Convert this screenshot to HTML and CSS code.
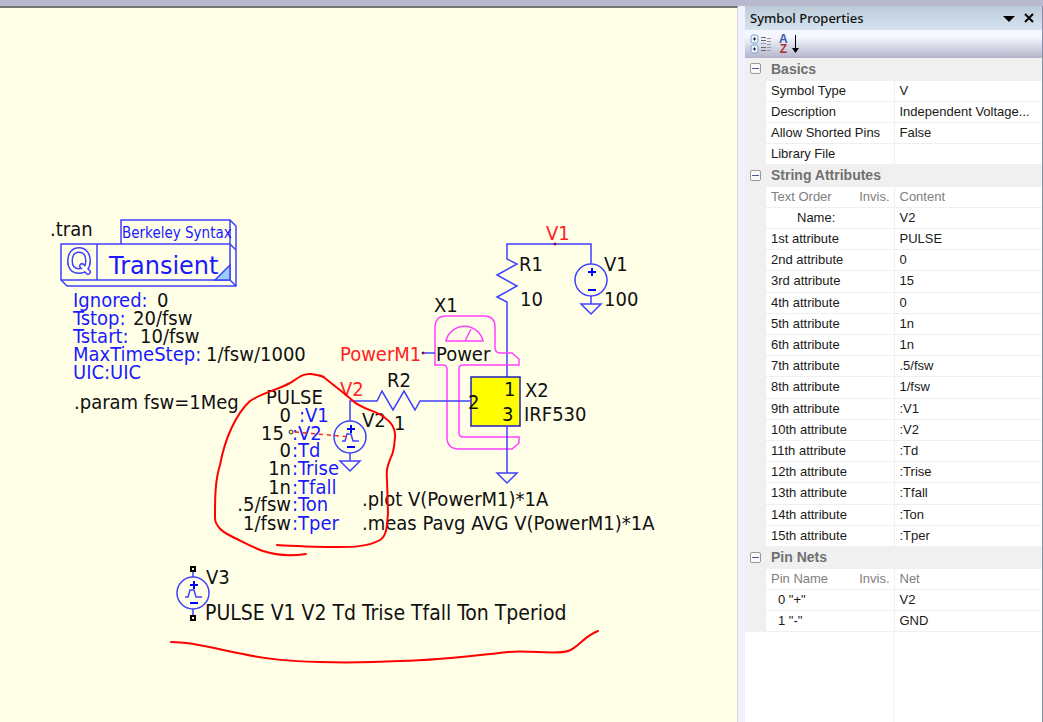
FILE: index.html
```
<!DOCTYPE html>
<html lang="en">

<head>
  <meta charset="UTF-8">
  <meta name="viewport" content="width=device-width, initial-scale=1.0">
  <title>Schematic</title>
  <link rel="stylesheet" href="styles.css">
</head>

<body>
  <main class="canvas">
    <svg class="schematic" width="100%" height="100%">
      <defs>
        <g id="source" class="wire">
          <circle r="16" />
          <path class="sign" d="M-3 -8h8M1 -12v8M-3 10h8" />
        </g>
        <path id="gnd" class="wire" d="M-10 0h20l-10 10z" />
        <path id="pulse" class="wire" d="M-8 4h3l2 -7h4l2 7h6" />
      </defs>

      <g transform="translate(0 -8)">
        <!-- .tran block -->
        <g class="wire">
          <path d="M61 244h169v36h-169zM97 244v36M121 244v-24h109v24M230 220l6 6v60h-169l-6 -6M230 244l6 6M230 280l6 6" />
          <path class="corner" d="M215 280l15 -15v15z" />
        </g>
        <path class="q-out" d="M79 250c-6 0 -9 5 -9 11s3 10 9 10 9 -4 9 -10 -3 -11 -9 -11zM82 266l6 6" />
        <path class="q-in" d="M79 250c-6 0 -9 5 -9 11s3 10 9 10 9 -4 9 -10 -3 -11 -9 -11zM82 266l6 6" />
        <text x="50" y="236">.tran</text>
        <text class="blue syntax" x="122" y="238">Berkeley Syntax</text>
        <text class="blue title" x="109" y="274">Transient</text>
        <g class="blue">
          <text x="73" y="307">Ignored:</text>
          <text x="73" y="325">Tstop:</text>
          <text x="73" y="343">Tstart:</text>
          <text x="73" y="361">MaxTimeStep:</text>
          <text x="73" y="379">UIC:UIC</text>
        </g>
        <text x="157" y="307">0</text>
        <text x="133" y="325">20/fsw</text>
        <text x="140" y="343">10/fsw</text>
        <text x="206" y="361">1/fsw/1000</text>
        <text x="74" y="409">.param fsw=1Meg</text>

        <!-- V1 and R1 -->
        <path class="wire" d="M507 378v-76l-10 -5 20 -11 -20 -11 20 -11 -10 -5v-15h84v20M591 296v8" />
        <use href="#source" x="591" y="280" />
        <use href="#gnd" x="591" y="304" />
        <circle class="node" cx="555" cy="244" r="1" />
        <text class="red" x="546" y="240">V1</text>
        <text x="519" y="271">R1</text>
        <text x="520" y="306">10</text>
        <text x="604" y="271">V1</text>
        <text x="604" y="306">100</text>

        <!-- power probe -->
        <path class="probe" d="M446 316h38q11 0 11 11v20q0 6 5 6h12l7 6v6h-56q-4 0 -4 4v64q0 4 4 4h56v6l-7 6h-53q-12 0 -12 -12v-68q0 -4 -4 -4h-8v-37q0 -12 11 -12z" />
        <path class="probe" d="M446 341a19 19 0 0 1 37 0zM465 341l6 -12" />
        <path class="wire" d="M422 353h13" />
        <circle class="node" cx="423" cy="353" r="1" />
        <text x="434" y="312">X1</text>
        <text class="red" x="340" y="361">PowerM1</text>
        <text x="436" y="361">Power</text>

        <!-- X2 and R2 -->
        <rect class="chip" x="471" y="377" width="49" height="49" />
        <path class="wire" d="M471 401h-51l-5 9 -11 -19 -11 19 -11 -19 -5 10h-27v20M350 453v8M507 426v47" />
        <use href="#gnd" x="507" y="473" />
        <text x="504" y="396">1</text>
        <text x="468" y="409">2</text>
        <text x="502" y="421">3</text>
        <text x="525" y="397">X2</text>
        <text x="524" y="421">IRF530</text>
        <text x="387" y="387">R2</text>
        <text x="394" y="430">1</text>

        <!-- V2 -->
        <use href="#source" x="350" y="437" />
        <use href="#pulse" x="350" y="437" />
        <use href="#gnd" x="350" y="461" />
        <text class="red" x="340" y="396">V2</text>
        <text x="362" y="427">V2</text>
        <text x="266" y="404">PULSE</text>
        <g text-anchor="end">
          <text x="291" y="422">0</text>
          <text x="284" y="440">15</text>
          <text x="291" y="457">0</text>
          <text x="291" y="475">1n</text>
          <text x="291" y="494">1n</text>
          <text x="291" y="511">.5/fsw</text>
          <text x="291" y="530">1/fsw</text>
        </g>
        <g class="blue">
          <text x="299" y="422">:V1</text>
          <text x="292" y="440">:V2</text>
          <text x="292" y="457">:Td</text>
          <text x="292" y="475">:Trise</text>
          <text x="292" y="494">:Tfall</text>
          <text x="292" y="511">:Ton</text>
          <text x="292" y="530">:Tper</text>
        </g>
        <path class="tie" d="M295 432l56 5" />
        <circle class="anchor" cx="291" cy="432" r="2" />

        <text x="362" y="506">.plot V(PowerM1)*1A</text>
        <text x="362" y="530">.meas Pavg AVG V(PowerM1)*1A</text>

        <!-- V3 -->
        <use href="#source" x="193" y="593" />
        <use href="#pulse" x="193" y="593" />
        <path class="wire" d="M193 571v6M193 609v6" />
        <rect class="pin" x="191" y="567" width="4" height="4" />
        <rect class="pin" x="191" y="616" width="4" height="4" />
        <text x="206" y="584">V3</text>
        <text class="value" x="205" y="620">PULSE V1 V2 Td Trise Tfall Ton Tperiod</text>

        <!-- red pen -->
        <path class="pen" d="M306 554C292 556 275 555 263 551C252 547 243 542 237 539C226 534 214 528 215 516C215 500 215 480 220 465C225 438 236 414 250 401C262 393 277 390 290 383C298 378 304 373 311 374C318 375 323 375 326 379C336 387 344 393 352 400C362 410 376 410 384 417C391 422 396 428 395 437C394 448 394 452 391 457C388 465 386 468 387 480L388 513C387 525 387 536 380 540C368 547 350 547 338 547C318 547 298 546 277 545" />
        <path class="pen" d="M171 642C196 642 220 650 243 654C270 660 290 661 320 662C350 663 380 662 400 661C440 660 480 655 508 652C530 650 556 655 568 651C578 648 584 636 598 631" />
      </g>
    </svg>
  </main>

  <aside class="panel">
    <header class="panel-head">
      <h1>Symbol Properties</h1>
      <button type="button" aria-label="Menu"><svg width="12" height="12"><path d="M0 4h12l-6 6z" /></svg></button>
      <button type="button" aria-label="Close"><svg width="12" height="12"><path class="cross" d="M2 2l8 8M10 2l-8 8" /></svg></button>
    </header>
    <div class="tools">
      <button type="button" aria-label="Categorized">
        <svg width="22" height="20">
          <rect class="knob" x="1" y="1" width="7" height="8" rx="2" />
          <rect class="knob" x="1" y="11" width="7" height="8" rx="2" />
          <path d="M3 5h3M3 15h3M4.500 3.500v3M4.500 13.500v3" stroke="#123" />
          <path d="M11 3.500h5M11 6.500h5M11 13.500h5M11 16.500h5" stroke="#666" />
          <path d="M11 9.500h5M17 4.500h4M17 7.500h4M17 10.500h4M17 13.500h4M17 16.500h4" stroke="#99a" />
        </svg>
      </button>
      <button type="button" class="sort" aria-label="Alphabetical">
        <span><b class="a">A</b><b class="z">Z</b></span>
        <svg width="7" height="20"><path d="M3.500 1v16" stroke="#000" /><path d="M0 14h7l-3.500 5z" /></svg>
      </button>
    </div>

    <table class="grid">
      <colgroup>
        <col class="col-gutter">
        <col class="col-name">
        <col>
      </colgroup>
      <tbody>
        <tr class="group"><td><button type="button" aria-label="Collapse"></button></td><th colspan="2">Basics</th></tr>
        <tr><td></td><th>Symbol Type</th><td>V</td></tr>
        <tr><td></td><th>Description</th><td>Independent Voltage...</td></tr>
        <tr><td></td><th>Allow Shorted Pins</th><td>False</td></tr>
        <tr><td></td><th>Library File</th><td></td></tr>
      </tbody>
      <tbody>
        <tr class="group"><td><button type="button" aria-label="Collapse"></button></td><th colspan="2">String Attributes</th></tr>
        <tr class="muted"><td></td><th><div class="pair"><span>Text Order</span><span>Invis.</span></div></th><td>Content</td></tr>
        <tr><td></td><th class="name">Name:</th><td>V2</td></tr>
        <tr><td></td><th>1st attribute</th><td>PULSE</td></tr>
        <tr><td></td><th>2nd attribute</th><td>0</td></tr>
        <tr><td></td><th>3rd attribute</th><td>15</td></tr>
        <tr><td></td><th>4th attribute</th><td>0</td></tr>
        <tr><td></td><th>5th attribute</th><td>1n</td></tr>
        <tr><td></td><th>6th attribute</th><td>1n</td></tr>
        <tr><td></td><th>7th attribute</th><td>.5/fsw</td></tr>
        <tr><td></td><th>8th attribute</th><td>1/fsw</td></tr>
        <tr><td></td><th>9th attribute</th><td>:V1</td></tr>
        <tr><td></td><th>10th attribute</th><td>:V2</td></tr>
        <tr><td></td><th>11th attribute</th><td>:Td</td></tr>
        <tr><td></td><th>12th attribute</th><td>:Trise</td></tr>
        <tr><td></td><th>13th attribute</th><td>:Tfall</td></tr>
        <tr><td></td><th>14th attribute</th><td>:Ton</td></tr>
        <tr><td></td><th>15th attribute</th><td>:Tper</td></tr>
      </tbody>
      <tbody>
        <tr class="group"><td><button type="button" aria-label="Collapse"></button></td><th colspan="2">Pin Nets</th></tr>
        <tr class="muted"><td></td><th><div class="pair"><span>Pin Name</span><span>Invis.</span></div></th><td>Net</td></tr>
        <tr><td></td><th class="pin-name">0 "+"</th><td>V2</td></tr>
        <tr><td></td><th class="pin-name">1 "-"</th><td>GND</td></tr>
      </tbody>
    </table>
    <div class="rest"></div>
  </aside>
</body>

</html>
```
FILE: styles.css
```
* {
  box-sizing: border-box;
  margin: 0;
  padding: 0;
}

body {
  display: flex;
  height: 100vh;
  border-top: 6px solid #b8b8ce;
  background-color: #f0f0ff;
  font-family: "Liberation Sans", Arial, sans-serif;
  overflow: hidden;
}

button {
  border: 0;
  background: none;
  cursor: pointer;
}

/* drawing area */
.canvas {
  flex: 1;
  min-width: 0;
  border-top: 2px solid #77776f;
  border-right: 1px solid #d8d8dc;
  background-color: #ffffe8;
}

.schematic {
  display: block;
  font-family: "DejaVu Sans Condensed", "Noto Sans", sans-serif;
  font-size: 20px;
  fill: #111;
}

.schematic .blue {
  fill: #1a1aff;
}

.schematic .red {
  fill: #f22;
}

.schematic .syntax {
  font-size: 15px;
}

.schematic .value {
  font-size: 21px;
}

.schematic .title {
  font-family: "DejaVu Sans", sans-serif;
  font-size: 24px;
}

.wire {
  fill: none;
  stroke: #4040ff;
  stroke-width: 1.5;
}

.sign {
  stroke: #00f;
  stroke-width: 2;
}

.corner {
  fill: #9cf;
}

.q-out,
.q-in {
  fill: none;
  stroke: #4040ff;
  stroke-width: 6;
  stroke-linecap: round;
}

.q-in {
  stroke: #ffffe8;
  stroke-width: 3;
}

.node {
  fill: #800040;
  stroke: #800040;
}

.probe {
  fill: none;
  stroke: #ff40ff;
  stroke-width: 1.5;
}

.chip {
  fill: #ff0;
  stroke: #2020c0;
  stroke-width: 1.5;
}

.tie {
  stroke: #f22;
  stroke-width: 1.5;
  stroke-dasharray: 4 4;
}

.anchor {
  fill: #ff0;
  stroke: #2020c0;
}

.pin {
  fill: #ffffe8;
  stroke: #000;
  stroke-width: 2;
}

.pen {
  fill: none;
  stroke: #f00;
  stroke-width: 2;
  stroke-linecap: round;
}

/* properties panel */
.panel {
  display: flex;
  flex-direction: column;
  width: 298px;
  margin-left: 7px;
  border-right: 1px solid #8a8fa5;
  background-color: #fff;
}

.panel-head {
  display: flex;
  align-items: center;
  gap: 8px;
  height: 24px;
  padding: 0 7px 0 5px;
  background: linear-gradient(#bccbd9, #d6e4f0);
}

.panel-head h1 {
  flex: 1;
  font: 500 13px "Noto Sans", sans-serif;
  color: #111;
}

.panel-head button,
.tools svg,
.panel-head svg {
  display: block;
}

.cross {
  stroke: #000;
  stroke-width: 2;
}

.tools {
  display: flex;
  gap: 7px;
  height: 28px;
  padding: 4px 5px;
  background: linear-gradient(#f4f7fe 25%, #b4b4ca);
}

.knob {
  fill: #e8f2fa;
  stroke: #7aa7d0;
}

.sort {
  display: flex;
  gap: 4px;
}

.sort b {
  display: block;
  font: bold 12px/10px "Liberation Sans", sans-serif;
}

.a {
  color: #3a5aa8;
}

.z {
  color: #a33;
}

.grid {
  width: 100%;
  border-collapse: collapse;
  table-layout: fixed;
  font-size: 13px;
  line-height: 20px;
  color: #1a1a1a;
}

.col-gutter {
  width: 21px;
}

.col-name {
  width: 128px;
}

.grid td,
.grid th {
  height: 21px;
  padding-left: 5px;
  border-bottom: 1px solid #f0f0f0;
  font-weight: normal;
  text-align: left;
  white-space: nowrap;
}

.grid tr:nth-child(5n+1) > * {
  height: 22px;
}

.grid td:first-child {
  background-color: #f0f0f0;
}

.grid th {
  border-right: 1px solid #f0f0f0;
}

.grid .group th {
  background-color: #f0f0f0;
  color: #707070;
  font-size: 14px;
  font-weight: bold;
}

.grid td button {
  display: block;
  width: 11px;
  height: 11px;
  border: 1px solid #999;
  border-radius: 2px;
  background: linear-gradient(#4a5f9a, #4a5f9a) center / 7px 1px no-repeat #fafafa;
}

.grid .muted {
  color: #808080;
}

.pair {
  display: flex;
  justify-content: space-between;
  padding-right: 4px;
}

.grid .name {
  padding-left: 31px;
}

.grid .pin-name {
  padding-left: 12px;
}

.rest {
  flex: 1;
  width: 149px;
  border-right: 1px solid #f0f0f0;
}
```
